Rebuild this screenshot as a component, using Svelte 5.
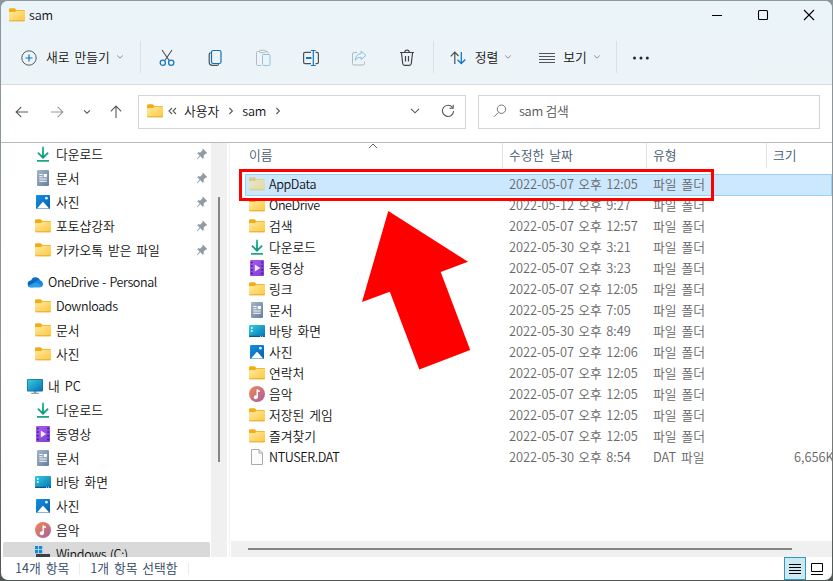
<script lang="ts">
	type Entry = {
		icon: string;
		name: string;
		date?: string;
		type?: string;
		size?: string;
	};

	type NavItem = {
		icon: string;
		name: string;
		root?: boolean;
		pinned?: boolean;
		selected?: boolean;
	};

	const navItems: NavItem[] = [
		{ icon: "download", name: "다운로드", pinned: true },
		{ icon: "document", name: "문서", pinned: true },
		{ icon: "picture", name: "사진", pinned: true },
		{ icon: "folder", name: "포토샵강좌", pinned: true },
		{ icon: "folder", name: "카카오톡 받은 파일", pinned: true },
		{ icon: "cloud", name: "OneDrive - Personal", root: true },
		{ icon: "folder", name: "Downloads" },
		{ icon: "folder", name: "문서" },
		{ icon: "folder", name: "사진" },
		{ icon: "pc", name: "내 PC", root: true },
		{ icon: "download", name: "다운로드" },
		{ icon: "video", name: "동영상" },
		{ icon: "document", name: "문서" },
		{ icon: "desktop", name: "바탕 화면" },
		{ icon: "picture", name: "사진" },
		{ icon: "music", name: "음악" },
		{ icon: "drive", name: "Windows (C:)", selected: true },
	];

	const entries: Entry[] = [
		{ icon: "folder", name: "AppData", date: "2022-05-07 오후 12:05", type: "파일 폴더" },
		{ icon: "folder", name: "OneDrive", date: "2022-05-12 오후 9:27", type: "파일 폴더" },
		{ icon: "folder", name: "검색", date: "2022-05-07 오후 12:57", type: "파일 폴더" },
		{ icon: "download", name: "다운로드", date: "2022-05-30 오후 3:21", type: "파일 폴더" },
		{ icon: "video", name: "동영상", date: "2022-05-07 오후 3:23", type: "파일 폴더" },
		{ icon: "folder", name: "링크", date: "2022-05-07 오후 12:05", type: "파일 폴더" },
		{ icon: "document", name: "문서", date: "2022-05-25 오후 7:05", type: "파일 폴더" },
		{ icon: "desktop", name: "바탕 화면", date: "2022-05-30 오후 8:49", type: "파일 폴더" },
		{ icon: "picture", name: "사진", date: "2022-05-07 오후 12:06", type: "파일 폴더" },
		{ icon: "folder", name: "연락처", date: "2022-05-07 오후 12:05", type: "파일 폴더" },
		{ icon: "music", name: "음악", date: "2022-05-07 오후 12:05", type: "파일 폴더" },
		{ icon: "folder", name: "저장된 게임", date: "2022-05-07 오후 12:05", type: "파일 폴더" },
		{ icon: "folder", name: "즐겨찾기", date: "2022-05-07 오후 12:05", type: "파일 폴더" },
		{ icon: "file", name: "NTUSER.DAT", date: "2022-05-30 오후 8:54", type: "DAT 파일", size: "6,656KB" },
	];

	let selected = $state(0);

	const isLatin = (text: string) => !/[가-힣]/.test(text);
</script>

{#snippet icon(name: string)}
	<svg class="icon" width="16" height="16" viewBox="0 0 16 16" fill="none">
		{#if name === "folder"}
			<path d="M0 2.7Q0 1.3 1.4 1.3H5.6L7.5 3H14.8Q16 3 16 4.2V7H0Z" fill="#f3ac13" />
			<path d="M0 5.7Q0 5.1.8 5.1H5.8L7.6 3.7H15Q16 3.7 16 4.7V13Q16 14.2 14.8 14.2H1.2Q0 14.2 0 13Z" fill="url(#folder-face)" />
			<path d="M.3 13.8H15.7" stroke="#dda833" stroke-width=".9" />
		{:else if name === "download"}
			<path d="M8 .8V11M2.9 6.6L8 11.6L13.1 6.6" stroke="url(#download-arrow)" stroke-width="1.9" />
			<path d="M2 14.9H14" stroke="#20a67e" stroke-width="1.8" />
		{:else if name === "document"}
			<rect x="2" y="0" width="12" height="16" rx="1" fill="url(#document-face)" />
			<path d="M4.3 4.5H7.6M4.3 6.7H7.6M4.3 9H11.8M4.3 11.3H11.8" stroke="#fff" stroke-width="1.1" />
			<rect x="8.7" y="4" width="3.2" height="3.2" fill="#fff" />
		{:else if name === "picture"}
			<rect x="1" y="1" width="14" height="14" rx="1" fill="url(#picture-face)" />
			<path d="M2 14.5L7.4 8.2Q8 7.6 8.6 8.2L14.2 14.5Z" fill="#fff" />
			<circle cx="11.4" cy="4.2" r="1.4" fill="#d9f0ff" />
		{:else if name === "video"}
			<rect x="1" y="0" width="14" height="16" rx="1" fill="url(#video-face)" />
			<path d="M2 2.5H3.7M2 6H3.7M2 9.8H3.7M2 13.4H3.7M12.3 2.5H14M12.3 6H14M12.3 9.8H14M12.3 13.4H14" stroke="#401d82" stroke-width="1.6" />
			<path d="M5.8 4.5L11.2 8L5.8 11.5Z" fill="#f5eaff" />
		{:else if name === "desktop"}
			<rect x="0" y="2" width="16" height="12" rx="1" fill="url(#desktop-face)" />
			<path d="M2 5H3.6M2 8H3.6" stroke="#fff" stroke-width="1.5" />
			<path d="M0 12.7H16V13.2Q16 14 15 14H1Q0 14 0 13.2Z" fill="#0a568c" />
			<path d="M11 13.3H12M13 13.3H14" stroke="#b2eaff" />
		{:else if name === "music"}
			<circle cx="8" cy="8" r="8" fill="url(#music-face)" />
			<path d="M8.2 11.2V3.6Q9 5.1 11 5.4" stroke="#fff" stroke-width="1.4" />
			<circle cx="6.8" cy="11.2" r="2" fill="#fff" />
		{:else if name === "cloud"}
			<path d="M4 7A4.8 4.8 0 0 1 13 6L15 12L2 12Z" fill="#1169c7" />
			<path d="M3.7 13.3A3.5 3.5 0 0 1 3.5 6.4Q7 5.7 9 9L6 13.3Z" fill="#0c64ba" />
			<path d="M3.7 13.3Q1.5 13.3 .9 11.9L9.4 7.2Q10.8 5.4 13 6.3Q15.8 7.1 16 10Q15.8 13.3 12.8 13.3Z" fill="#1b84dd" />
			<path d="M.9 12L8.6 8.5L15.4 12Q14.4 13.3 12.8 13.3H3.7Q1.7 13.3 .9 12Z" fill="#29a0ea" />
		{:else if name === "pc"}
			<path d="M6.7 13H9.3V15H6.7Z" fill="#9ca5ab" />
			<path d="M4.2 15.3H11.8" stroke="#83898d" />
			<rect x="0" y="1" width="16" height="12.5" rx="1" fill="#196a9a" />
			<rect x=".7" y="1.7" width="14.6" height="11" fill="url(#desktop-face)" />
		{:else if name === "drive"}
			<path d="M0 0H3.2V3.2H0ZM4 0H7.2V3.2H4ZM0 4H3.2V7.2H0ZM4 4H7.2V7.2H4Z" fill="#148bd5" />
			<rect x="1" y="8" width="14" height="5" fill="#3c4044" />
		{:else if name === "file"}
			<path d="M2.5.5H10L13.5 4V15.5H2.5Z" fill="#fcfcfc" stroke="#aaa" />
			<path d="M10 .5V4H13.5" stroke="#aaa" />
		{/if}
	</svg>
{/snippet}

{#snippet chevron()}
	<svg class="chevron" width="8" height="6" viewBox="0 0 8 6" fill="none">
		<path d="M1.2 1.5L4 4.2L6.8 1.5" stroke="currentColor" />
	</svg>
{/snippet}

<!-- Gradients shared by every icon -->
<svg class="defs" width="0" height="0" aria-hidden="true">
	<defs>
		<linearGradient id="folder-face" x1="0" y1="0" x2="1" y2="1"><stop stop-color="#ffe9a2" /><stop offset="1" stop-color="#fdc83c" /></linearGradient>
		<linearGradient id="download-arrow" gradientUnits="userSpaceOnUse" x1="8" y1="0" x2="8" y2="12"><stop stop-color="#2ec28f" /><stop offset="1" stop-color="#119484" /></linearGradient>
		<linearGradient id="document-face" x1="0" y1="0" x2="1" y2="1"><stop stop-color="#a5b6cb" /><stop offset="1" stop-color="#647f9e" /></linearGradient>
		<linearGradient id="picture-face" x1="0" y1="0" x2="1" y2="1"><stop stop-color="#1690df" /><stop offset="1" stop-color="#0560b0" /></linearGradient>
		<linearGradient id="video-face" x1="0" y1="0" x2="1" y2="1"><stop stop-color="#a95cf2" /><stop offset="1" stop-color="#7c3dd4" /></linearGradient>
		<linearGradient id="desktop-face" x1="0" y1="0" x2="1" y2="1"><stop stop-color="#35cfdc" /><stop offset="1" stop-color="#0670b9" /></linearGradient>
		<linearGradient id="music-face" x1="0" y1="0" x2="1" y2="1"><stop stop-color="#f08b52" /><stop offset="1" stop-color="#a85c9f" /></linearGradient>
	</defs>
</svg>

<div class="desktop">
	<div class="window">
		<header class="title-bar">
			<div class="title">{@render icon("folder")}<span class="latin">sam</span></div>
			<div class="controls">
				<button aria-label="Minimize"><svg width="12" height="12" viewBox="0 0 12 12"><path d="M1 6.5H11" /></svg></button>
				<button aria-label="Maximize"><svg width="12" height="12" viewBox="0 0 12 12"><rect x="1.5" y="1.5" width="9" height="9" rx="1" /></svg></button>
				<button aria-label="Close"><svg width="12" height="12" viewBox="0 0 12 12"><path d="M1 1L11 11M11 1L1 11" /></svg></button>
			</div>
		</header>

		<div class="toolbar">
			<button class="tool new">
				<svg width="16" height="16" viewBox="0 0 16 16" fill="none">
					<circle cx="8" cy="8" r="7.2" stroke="#555b5f" />
					<path d="M8 4.5V11.5M4.5 8H11.5" stroke="#1674ba" stroke-width="1.2" />
				</svg>
				<span>새로 만들기</span>
				{@render chevron()}
			</button>
			<i class="divider"></i>
			<div class="actions">
				<button aria-label="Cut">
					<svg width="16" height="18" viewBox="0 0 16 18" fill="none">
						<path d="M3 1L10.5 12M13 1L5.5 12" stroke="#4b5054" stroke-width="1.1" />
						<circle cx="3.8" cy="13.8" r="2.6" stroke="#1078c5" stroke-width="1.3" />
						<circle cx="12.2" cy="13.8" r="2.6" stroke="#1078c5" stroke-width="1.3" />
					</svg>
				</button>
				<button aria-label="Copy">
					<svg width="16" height="18" viewBox="0 0 16 18" fill="none">
						<path d="M3.5 3.5Q2.2 4.2 2.2 5.6V13Q2.2 16.4 5.5 16.4H9.5Q11 16.4 11.7 15.2" stroke="#4b5054" stroke-width="1.2" />
						<rect x="4.5" y="1.5" width="9.5" height="13" rx="1.8" stroke="#1270ba" stroke-width="1.2" />
					</svg>
				</button>
				<button aria-label="Paste" disabled>
					<svg width="16" height="18" viewBox="0 0 16 18" fill="none">
						<path d="M5 2.5H2.5Q1.5 2.5 1.5 3.5V15.5Q1.5 16.5 2.5 16.5H6M10 2.5H12.2Q13.2 2.5 13.2 3.5V4.5" stroke="#b3babd" />
						<rect x="4.5" y="1.2" width="6" height="2.5" rx="1.2" stroke="#b3babd" />
						<rect x="7.5" y="5.5" width="7.5" height="11" rx="1" stroke="#8dc4e3" />
					</svg>
				</button>
				<button aria-label="Rename">
					<svg width="18" height="18" viewBox="0 0 18 18" fill="none">
						<path d="M9 3.4H3Q1.6 3.4 1.6 4.8V13.2Q1.6 14.6 3 14.6H9M13.5 3.4H15Q16.4 3.4 16.4 4.8V13.2Q16.4 14.6 15 14.6H13.5" stroke="#4b5054" stroke-width="1.2" />
						<path d="M4 9H9.5" stroke="#1277bf" stroke-width="1.8" />
						<path d="M11.3 1.7V16.3M8.9 1.5H13.7M8.9 16.5H13.7" stroke="#1277bf" stroke-width="1.2" />
					</svg>
				</button>
				<button aria-label="Share" disabled>
					<svg width="16" height="18" viewBox="0 0 16 18" fill="none">
						<path d="M6 3.5H3Q1.5 3.5 1.5 5V14.5Q1.5 16 3 16H12Q13.5 16 13.5 14.5V12.5" stroke="#b1b9bd" />
						<path d="M10.1 2.1L14.9 6.4L10.1 10.5V8.2Q6.5 7.8 4.2 11.3Q4.7 5.3 10.1 4.5Z" stroke="#86bfe2" stroke-linejoin="round" />
					</svg>
				</button>
				<button aria-label="Delete">
					<svg width="16" height="18" viewBox="0 0 16 18" fill="none">
						<path d="M1 3.5H15M5.8 3.2Q5.8 1.2 8 1.2Q10.2 1.2 10.2 3.2M2.5 4L3.7 14.5Q4 16.4 5.6 16.4H10.4Q12 16.4 12.3 14.5L13.5 4M6.5 7V12.5M9.5 7V12.5" stroke="#3f4447" stroke-width="1.2" />
					</svg>
				</button>
			</div>
			<i class="divider"></i>
			<button class="tool sort">
				<svg width="16" height="14" viewBox="0 0 16 14" fill="none">
					<path d="M4.8 13V1.5M.7 5.3L4.8 1.2L8.5 5" stroke="#4b5054" stroke-width="1.2" />
					<path d="M11.3 1V12.5M7.5 8.7L11.3 12.5L15.3 8.5" stroke="#1277c4" stroke-width="1.3" />
				</svg>
				<span>정렬</span>
				{@render chevron()}
			</button>
			<button class="tool view">
				<svg width="16" height="12" viewBox="0 0 16 12"><path d="M0 1.5H16M0 4.5H16M0 7.5H16M0 10.5H16" stroke="#4f5457" /></svg>
				<span>보기</span>
				{@render chevron()}
			</button>
			<i class="divider"></i>
			<button class="more" aria-label="More">
				<svg width="18" height="4" viewBox="0 0 18 4" fill="#23272a"><circle cx="2.5" cy="2" r="1.5" /><circle cx="9" cy="2" r="1.5" /><circle cx="15.3" cy="2" r="1.5" /></svg>
			</button>
		</div>

		<div class="address-row">
			<div class="history">
				<svg width="14" height="14" viewBox="0 0 14 14"><path d="M13 7H1.2M6.3 1.8L1.1 7L6.3 12.2" /></svg>
				<svg class="faded" width="14" height="14" viewBox="0 0 14 14"><path d="M1 7H12.8M7.7 1.8L12.9 7L7.7 12.2" /></svg>
				<svg class="recent" width="8" height="6" viewBox="0 0 8 6"><path d="M1 1.3L4 4.2L7 1.3" /></svg>
				<svg width="14" height="14" viewBox="0 0 14 14"><path d="M7 13V1.2M1.8 6.3L7 1.1L12.2 6.3" /></svg>
			</div>
			<div class="address">
				{@render icon("folder")}
				<svg class="crumb-more" width="9" height="8" viewBox="0 0 9 8"><path d="M4 1L1 4L4 7M8 1L5 4L8 7" /></svg>
				<span>사용자</span>
				<svg class="crumb" width="6" height="8" viewBox="0 0 6 8"><path d="M1.4 1L4.4 4L1.4 7" /></svg>
				<span class="latin">sam</span>
				<svg class="crumb" width="6" height="8" viewBox="0 0 6 8"><path d="M1.4 1L4.4 4L1.4 7" /></svg>
				<svg class="drop" width="10" height="6" viewBox="0 0 10 6"><path d="M1 .8L5 4.8L9 .8" /></svg>
				<svg class="refresh" width="14" height="14" viewBox="0 0 14 14"><path d="M11.5 3.5A5.6 5.6 0 1 0 12.6 7M12.2 .8V4.2H8.4" /></svg>
			</div>
			<div class="search">
				<svg width="14" height="14" viewBox="0 0 14 14"><circle cx="8.5" cy="5.2" r="4.2" /><path d="M5.5 8.3L1 12.8" /></svg>
				<span>sam 검색</span>
			</div>
		</div>

		<main class="content">
			<nav class="nav-pane">
				{#each navItems as item}
					<div class="nav-item" class:root={item.root} class:selected={item.selected}>
						{@render icon(item.icon)}
						<span class:latin={isLatin(item.name)}>{item.name}</span>
						{#if item.pinned}
							<svg class="pin" width="12" height="12" viewBox="0 0 12 12" fill="#919ba5">
								<path d="M7 .8L11.2 5L10 5.8L9.5 5.7L7.7 7.8L7.8 10L6.8 10.8L4.3 8.3L1 11.4L.6 11L3.6 7.6L1.2 5.2L2.2 4.2L4.3 4.4L6.4 2.5L6.2 1.7Z" />
							</svg>
						{/if}
					</div>
				{/each}
			</nav>
			<div class="nav-scroll"><div class="nav-thumb"></div></div>

			<section class="file-pane">
				<div class="columns head">
					<span>이름</span>
					<span>수정한 날짜</span>
					<span>유형</span>
					<span>크기</span>
					<svg class="sort-mark" width="10" height="6" viewBox="0 0 10 6"><path d="M1 5L5 1L9 5" /></svg>
				</div>
				<div class="rows">
					{#each entries as entry, i}
						<div class="columns row" class:selected={selected === i} onclick={() => (selected = i)} role="presentation">
							<div class="name">{@render icon(entry.icon)}<span class:latin={isLatin(entry.name)}>{entry.name}</span></div>
							<span class="date">{entry.date}</span>
							<span>{entry.type}</span>
							<span class="size">{entry.size ?? ""}</span>
						</div>
					{/each}
				</div>
				<div class="h-scroll"><div class="h-thumb"></div></div>
			</section>
		</main>

		<footer class="status-bar">
			<span>14개 항목</span>
			<i></i>
			<span>1개 항목 선택함</span>
			<i></i>
			<div class="layouts">
				<button class="active" aria-label="Details"><svg width="12" height="12" viewBox="0 0 12 12"><path d="M0 1.5H12M0 4.5H12M0 7.5H12M0 10.5H12" /></svg></button>
				<button aria-label="Large icons"><svg width="12" height="12" viewBox="0 0 12 12"><path d="M.5.5H11.5V8.5H.5ZM0 11.5H12" /></svg></button>
			</div>
		</footer>
	</div>

	<!-- Callout over the AppData row -->
	<div class="highlight"></div>
	<svg class="arrow" width="110" height="160" viewBox="0 0 110 160">
		<path d="M27.3 1L107 51.8L79.7 62L109.2 140L58.3 159.5L28.8 81.8L1 92Z" fill="#f00" />
	</svg>
</div>

<style>
	:global(body) {
		margin: 0;
		overflow: hidden;
	}

	.defs {
		position: absolute;
	}

	.desktop {
		position: relative;
		width: 833px;
		height: 581px;
		box-sizing: border-box;
		padding: 1px;
		overflow: hidden;
		background: linear-gradient(#8a989c, #8f9392 60%, #4c5652);
		font-family: "Noto Sans CJK KR", "Noto Sans", sans-serif;
		font-size: 12.8px;
		font-weight: 350;
		line-height: 20px;
		word-spacing: 2px;
		color: #111;
		white-space: nowrap;
	}

	.window {
		display: flex;
		flex-direction: column;
		height: 100%;
		background: #fff;
		border-radius: 7px;
		overflow: hidden;
	}

	svg {
		display: block;
		flex: none;
	}

	button {
		display: flex;
		align-items: center;
		justify-content: center;
		padding: 0;
		border: 0;
		background: none;
		color: inherit;
		font: inherit;
		word-spacing: inherit;
	}

	.latin {
		font-size: 12.6px;
		letter-spacing: -0.4px;
		word-spacing: 1px;
	}

	.title-bar {
		display: flex;
		justify-content: space-between;
		height: 29px;
		background: #ebf4f9;
	}

	.title {
		display: flex;
		align-items: center;
		gap: 4px;
		padding: 0 0 1px 8px;
	}

	.title .latin,
	.address .latin {
		letter-spacing: -0.2px;
	}

	.controls {
		display: flex;
	}

	.controls button {
		width: 46px;
		height: 28px;
	}

	.controls svg {
		fill: none;
		stroke: #000;
		stroke-width: 1.1;
	}

	.toolbar {
		display: flex;
		align-items: center;
		height: 54px;
		border-bottom: 1px solid #d8dcde;
		background: linear-gradient(#ebf4f9, #edf4f8);
	}

	.divider {
		width: 1px;
		height: 32px;
		background: #dae1e5;
	}

	.chevron {
		color: #8a9195;
	}

	.tool > svg:first-child {
		margin-top: 1px;
	}

	.tool.new {
		width: 139px;
		padding-left: 20px;
		gap: 8px;
		justify-content: flex-start;
		box-sizing: border-box;
	}

	.new span {
		margin-left: 1px;
		margin-right: -2px;
	}

	.actions {
		display: flex;
		width: 292px;
		padding-left: 2px;
		box-sizing: border-box;
	}

	.actions button {
		width: 48px;
		padding-top: 1px;
	}

	.sort {
		width: 88px;
		padding-left: 6px;
		gap: 8px;
	}

	.sort span {
		margin: 0 -2px 0 1px;
	}

	.view {
		width: 94px;
		padding-left: 2px;
		box-sizing: border-box;
		gap: 8px;
	}

	.view span {
		margin-right: -2px;
	}

	.more {
		width: 47px;
		padding-top: 2px;
	}

	.address-row {
		display: flex;
		align-items: center;
		height: 58px;
		border-bottom: 1px solid #b9bcbe;
		box-sizing: border-box;
		padding-bottom: 3px;
	}

	.address-row svg:not(.icon) {
		fill: none;
		stroke: #55595c;
		stroke-width: 1.1;
	}

	.history {
		display: flex;
		align-items: center;
		width: 137px;
		padding-left: 14px;
		box-sizing: border-box;
	}

	.address-row .faded {
		opacity: 0.6;
		margin-left: 21px;
	}

	.recent {
		margin: 0 18px 0 19px;
	}

	.address,
	.search {
		display: flex;
		align-items: center;
		height: 34px;
		border: 1px solid #d4d5d6;
		box-sizing: border-box;
	}

	.address {
		width: 328px;
		padding: 0 0 2px 8px;
	}

	.crumb-more {
		margin: 0 7px 0 5px;
	}

	.crumb {
		margin: 0 8px 0 9px;
	}

	.drop {
		margin-left: auto;
	}

	.refresh {
		margin: 0 10px 0 21px;
	}

	.search {
		width: 342px;
		margin-left: 12px;
		padding: 0 0 2px 14px;
		gap: 12px;
		color: #555;
		word-spacing: 0;
		letter-spacing: -0.3px;
	}

	.address-row .search svg {
		stroke: #777;
		stroke-width: 1;
	}

	.content {
		display: flex;
		height: 414px;
	}

	.nav-pane {
		width: 210px;
		overflow: hidden;
	}

	.nav-item {
		display: flex;
		align-items: center;
		height: 24px;
		margin: 0 1px 0 2px;
		padding: 0 2px 0 32px;
	}

	.nav-item:first-child {
		margin-top: -1px;
	}

	.nav-item span {
		margin-left: 5px;
	}

	.nav-item.root {
		margin-top: 8px;
		padding-left: 24px;
	}

	.nav-item.selected {
		background: #d9d9d9;
		border-radius: 2px;
	}

	.pin {
		margin-left: auto;
	}

	.nav-scroll {
		width: 16px;
		padding: 54px 0 0 7px;
		box-sizing: border-box;
		background: #f0f0f0;
	}

	.nav-thumb {
		width: 2px;
		height: 265px;
		background: #858585;
	}

	.file-pane {
		display: flex;
		flex-direction: column;
		width: 602px;
		margin-left: 2px;
		border-left: 1px solid #f2f2f2;
		overflow: hidden;
	}

	.columns {
		display: grid;
		grid-template-columns: 257px 144px 120px 70px;
		align-items: center;
	}

	.head {
		position: relative;
		height: 25px;
		padding-left: 15px;
		color: #44586e;
	}

	.head > span {
		height: 25px;
		line-height: 24px;
		padding-left: 6px;
		border-left: 1px solid #e4e4e4;
	}

	.head > span:first-child {
		padding-left: 3px;
		border-color: transparent;
	}

	.sort-mark {
		position: absolute;
		left: 138px;
		top: 0;
		fill: none;
		stroke: #666;
	}

	.rows {
		flex: 1;
		padding-top: 5px;
	}

	.row {
		height: 21px;
		margin-left: 15px;
		color: #666;
	}

	.row > span {
		padding-left: 7px;
	}

	.row.selected {
		height: 22px;
		margin-top: 1px;
		margin-bottom: -2px;
		padding-bottom: 3px;
		box-sizing: border-box;
		background: #cce8ff;
		box-shadow: inset 0 0 0 1px #99d1f5;
	}

	.row.selected .name :global(.icon) {
		opacity: 0.5;
	}

	.name {
		display: flex;
		align-items: center;
		gap: 4px;
		padding-left: 4px;
		color: #111;
	}

	.row > .date {
		word-spacing: 1.5px;
	}

	.row > .size {
		padding-left: 28px;
	}

	.h-scroll {
		height: 16px;
		margin-left: 1px;
		padding: 7px 0 0 17px;
		box-sizing: border-box;
		background: #f0f0f0;
	}

	.h-thumb {
		width: 544px;
		height: 2px;
		background: #858585;
	}

	.status-bar {
		display: flex;
		align-items: center;
		flex: 1;
		padding-left: 14px;
		color: #2d4562;
	}

	.status-bar > span {
		margin-bottom: 2px;
	}

	.status-bar i {
		width: 1px;
		height: 12px;
		margin: 0 10px;
		background: #e9edf0;
	}

	.layouts {
		display: flex;
		margin-left: auto;
		padding-right: 4px;
	}

	.layouts button {
		width: 22px;
		height: 23px;
		box-sizing: border-box;
	}

	.layouts .active {
		border: 1px solid #2d9bbd;
		background: #cde8f3;
	}

	.layouts svg {
		fill: none;
		stroke: #000;
	}

	.highlight {
		position: absolute;
		left: 239px;
		top: 169px;
		width: 475px;
		height: 32px;
		box-sizing: border-box;
		border: 3px solid #f00;
	}

	.arrow {
		position: absolute;
		left: 361px;
		top: 210px;
	}
</style>
